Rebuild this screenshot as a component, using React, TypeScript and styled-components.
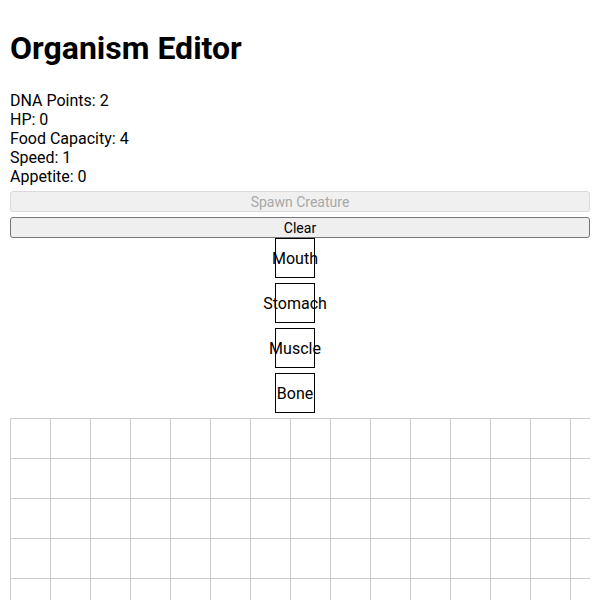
import React from 'react';
import styled, { createGlobalStyle } from 'styled-components';

const PARTS = ['Mouth', 'Stomach', 'Muscle', 'Bone'];
const GRID_COLUMNS = 15;
const GRID_ROWS = 5;

const stats = [
  { label: 'DNA Points', value: 2 },
  { label: 'HP', value: 0 },
  { label: 'Food Capacity', value: 4 },
  { label: 'Speed', value: 1 },
  { label: 'Appetite', value: 0 },
];

const App = () => {
  const cells = Array.from({ length: GRID_COLUMNS * GRID_ROWS });

  return (
    <>
      <GlobalStyle />
      <Editor>
        <Title>Organism Editor</Title>
        <Stats>
          {stats.map((stat) => (
            <StatLine key={stat.label}>
              {stat.label}: {stat.value}
            </StatLine>
          ))}
        </Stats>
        <Actions>
          <ActionButton disabled>Spawn Creature</ActionButton>
          <ActionButton>Clear</ActionButton>
        </Actions>
        <Palette>
          {PARTS.map((part) => (
            <PartTile key={part}>
              <span>{part}</span>
            </PartTile>
          ))}
        </Palette>
        <Board>
          {cells.map((_, i) => (
            <Cell key={i} />
          ))}
        </Board>
      </Editor>
    </>
  );
};

const GlobalStyle = createGlobalStyle`
  body {
    margin: 0;
    padding: 8px 10px;
    font-family: Roboto, "Liberation Sans", sans-serif;
    color: #000;
    background: #fff;
  }
`;

const Editor = styled.div`
  display: flex;
  flex-direction: column;
`;

const Title = styled.h1`
  font-size: 32px;
  font-weight: 700;
  margin: 22px 0 24px;
  line-height: 37px;
`;

const Stats = styled.div`
  display: flex;
  flex-direction: column;
  margin-bottom: 5px;
`;

const StatLine = styled.div`
  font-size: 16px;
  line-height: 19px;
`;

const Actions = styled.div`
  display: flex;
  flex-direction: column;
  gap: 5px;
`;

const ActionButton = styled.button`
  width: 100%;
  height: 21px;
  margin: 0;
  padding: 0 6px;
  font-family: Roboto, "Liberation Sans", sans-serif;
  font-size: 14px;
  color: #000;
  background: #efefef;
  border: 1px solid #767676;
  border-radius: 3px;

  &:disabled {
    color: #a8a8a8;
    background: #f0f0f0;
    border-color: #dadada;
  }
`;

const Palette = styled.div`
  display: flex;
  flex-direction: column;
  align-items: center;
  padding-right: 10px;
`;

const PartTile = styled.div`
  width: 40px;
  height: 40px;
  box-sizing: border-box;
  margin-bottom: 5px;
  border: 1px solid #000;
  display: flex;
  align-items: center;
  justify-content: center;
  font-size: 16px;
  white-space: nowrap;
`;

const Board = styled.div`
  display: grid;
  grid-template-columns: repeat(${GRID_COLUMNS}, 40px);
  grid-auto-rows: 40px;
  overflow: hidden;
`;

const Cell = styled.div`
  box-sizing: border-box;
  border-left: 1px solid #ccc;
  border-top: 1px solid #ccc;
`;

export default App;
